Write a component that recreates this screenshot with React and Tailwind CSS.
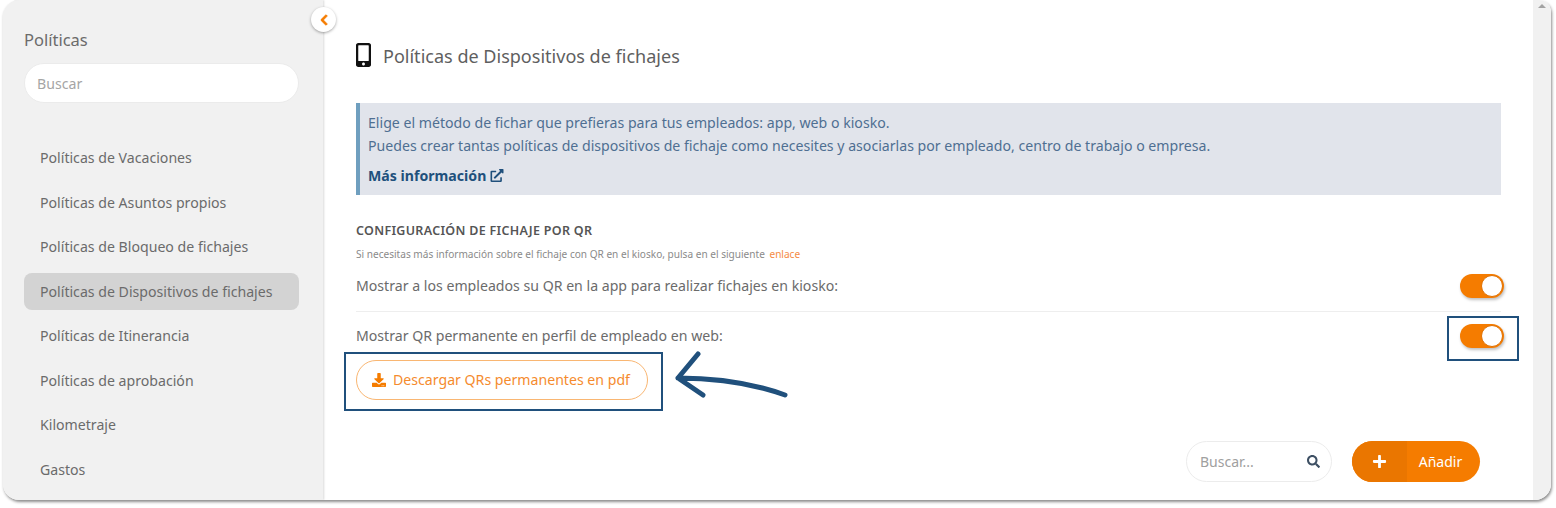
import React from 'react';
import { FaChevronLeft, FaMobileAlt, FaDownload, FaExternalLinkAlt, FaSearch, FaPlus } from 'react-icons/fa';

const policies = [
  'Políticas de Vacaciones',
  'Políticas de Asuntos propios',
  'Políticas de Bloqueo de fichajes',
  'Políticas de Dispositivos de fichajes',
  'Políticas de Itinerancia',
  'Políticas de aprobación',
  'Kilometraje',
  'Gastos',
];

function Toggle() {
  return (
    <div className="-mr-[3px] flex h-6 w-[44px] items-center justify-end rounded-full bg-[#f57c00] pr-px shadow-[1px_2px_3px_rgba(0,0,0,0.25)]">
      <div className="h-[22px] w-[22px] rounded-full border border-[#e07000] bg-white" />
    </div>
  );
}

export default function App() {
  return (
    <div className="h-[508px] w-[1556px] overflow-hidden bg-white font-['Noto_Sans',sans-serif]">
      <div className="relative ml-[3px] flex h-[500px] w-[1548px] overflow-hidden rounded-b-[16px] rounded-tl-[16px] rounded-tr-[12px] bg-white shadow-[1px_2px_3px_rgba(0,0,0,0.45)]">
        {/* sidebar */}
        <aside className="flex w-[320px] shrink-0 flex-col bg-[#f1f1f1] pl-[21px] pr-[24px] pt-[29px] shadow-[1px_0_2px_rgba(0,0,0,0.15)]">
          <h2 className="text-[16.5px] leading-[22px] text-[#6b6b6b]">Políticas</h2>
          <div className="mt-[12px] flex h-[40px] items-center rounded-full border border-[#ebebeb] bg-white px-[12px] pt-[1px] text-[14.14px] text-[#a5a5a5]">Buscar</div>
          <ul className="mt-[36.5px] flex flex-col gap-[8px]">
            {policies.map((p, i) => (
              <li key={p} className={`flex h-[36.5px] items-center rounded-lg px-[16px] text-[14.14px] text-[#6b6b6b] ${i === 3 ? 'bg-[#d3d3d3]' : ''}`}>{p}</li>
            ))}
          </ul>
        </aside>

        {/* main */}
        <main className="flex min-w-0 flex-1 flex-col pl-[33px] pr-[32px] pt-[43px]">
          <div className="flex h-[27px] items-center gap-[12px]">
            <FaMobileAlt className="mb-[4px] h-[24px] w-[15px] text-[#111]" />
            <h1 className="text-[18.05px] text-[#5f5f5f]">Políticas de Dispositivos de fichajes</h1>
          </div>

          <div className="mt-[33px] h-[92px] border-l-[4px] border-[#6f9fbf] bg-[#e1e4eb] pl-[8px] pt-[8px] text-[14.14px] text-[#4f6f92]">
            <p className="leading-[23px]">Elige el método de fichar que prefieras para tus empleados: app, web o kiosko.</p>
            <p className="leading-[23px]">Puedes crear tantas políticas de dispositivos de fichaje como necesites y asociarlas por empleado, centro de trabajo o empresa.</p>
            <p className="mt-[7px] flex items-center gap-[4px] font-bold leading-[23px] text-[#20507c]">
              Más información <FaExternalLinkAlt className="h-[13px] w-[14px]" />
            </p>
          </div>

          <h3 className="mt-[26px] text-[12.5px] font-semibold leading-[20px] tracking-[0.3px] text-[#555]">CONFIGURACIÓN DE FICHAJE POR QR</h3>
          <p className="mt-[6px] text-[10.08px] leading-[14px] text-[#8a8a8a]">
            Si necesitas más información sobre el fichaje con QR en el kiosko, pulsa en el siguiente <span className="ml-[2px] text-[#f58b45]">enlace</span>
          </p>

          <div className="mt-[1px] flex h-[50px] items-center justify-between border-b border-[#eeeeee] pb-[2px] text-[14.14px] text-[#6b6b6b]">
            <span>Mostrar a los empleados su QR en la app para realizar fichajes en kiosko:</span>
            <Toggle />
          </div>
          <div className="flex h-[48px] items-center justify-between text-[14.14px] text-[#6b6b6b]">
            <span>Mostrar QR permanente en perfil de empleado en web:</span>
            <Toggle />
          </div>

          <button className="flex h-[40px] w-[292px] items-center gap-[7px] rounded-full border border-[#f9b672] bg-white pl-[15px] text-[14.14px] text-[#f58b2e]">
            <FaDownload className="h-[14px] w-[14px] text-[#f57c00]" />
            Descargar QRs permanentes en pdf
          </button>

          <div className="mt-[41px] flex items-center justify-end gap-[20px] pr-[21px]">
            <div className="flex h-[41px] w-[146px] items-center justify-between rounded-full border border-[#ececec] bg-white pl-[13px] pr-[11px] text-[14px] text-[#a0a0a0]">
              Buscar...
              <FaSearch className="h-[13px] w-[13px] text-[#3d4f63]" />
            </div>
            <button className="flex h-[41px] w-[128px] overflow-hidden rounded-full bg-[#f57c00] text-[14px] text-white">
              <span className="flex h-full w-[55px] items-center justify-center bg-[#ea7600]">
                <FaPlus className="h-[15px] w-[15px]" />
              </span>
              <span className="flex h-full flex-1 items-center justify-center pr-[6px]">Añadir</span>
            </button>
          </div>
        </main>

        {/* scrollbar */}
        <div className="flex w-[18px] shrink-0 justify-center bg-[#f1f1f1] pt-[4px]">
          <div className="h-0 w-0 border-x-[4px] border-b-[4px] border-x-transparent border-b-[#a3a3a3]" />
        </div>
      </div>

      {/* collapse button */}
      <div className="absolute left-[311px] top-[7px] flex h-[25px] w-[25px] items-center justify-center rounded-full bg-white shadow-[0_1px_3px_rgba(0,0,0,0.35)]">
        <FaChevronLeft className="h-[12px] w-[12px] stroke-[40] text-[#f57c00]" />
      </div>

      {/* annotations */}
      <div className="absolute left-[344px] top-[352px] h-[59px] w-[319px] border-2 border-[#20507c]" />
      <div className="absolute left-[1447px] top-[316px] h-[45px] w-[72px] border-2 border-[#20507c]" />
      <svg className="absolute left-[670px] top-[350px]" width="125" height="56" viewBox="0 0 125 56" fill="none">
        <path d="M115 45C90 36 55 28 8 28M28 4L8 28L33 45" stroke="#20507c" strokeWidth="5" strokeLinecap="round" strokeLinejoin="round" />
      </svg>
    </div>
  );
}
